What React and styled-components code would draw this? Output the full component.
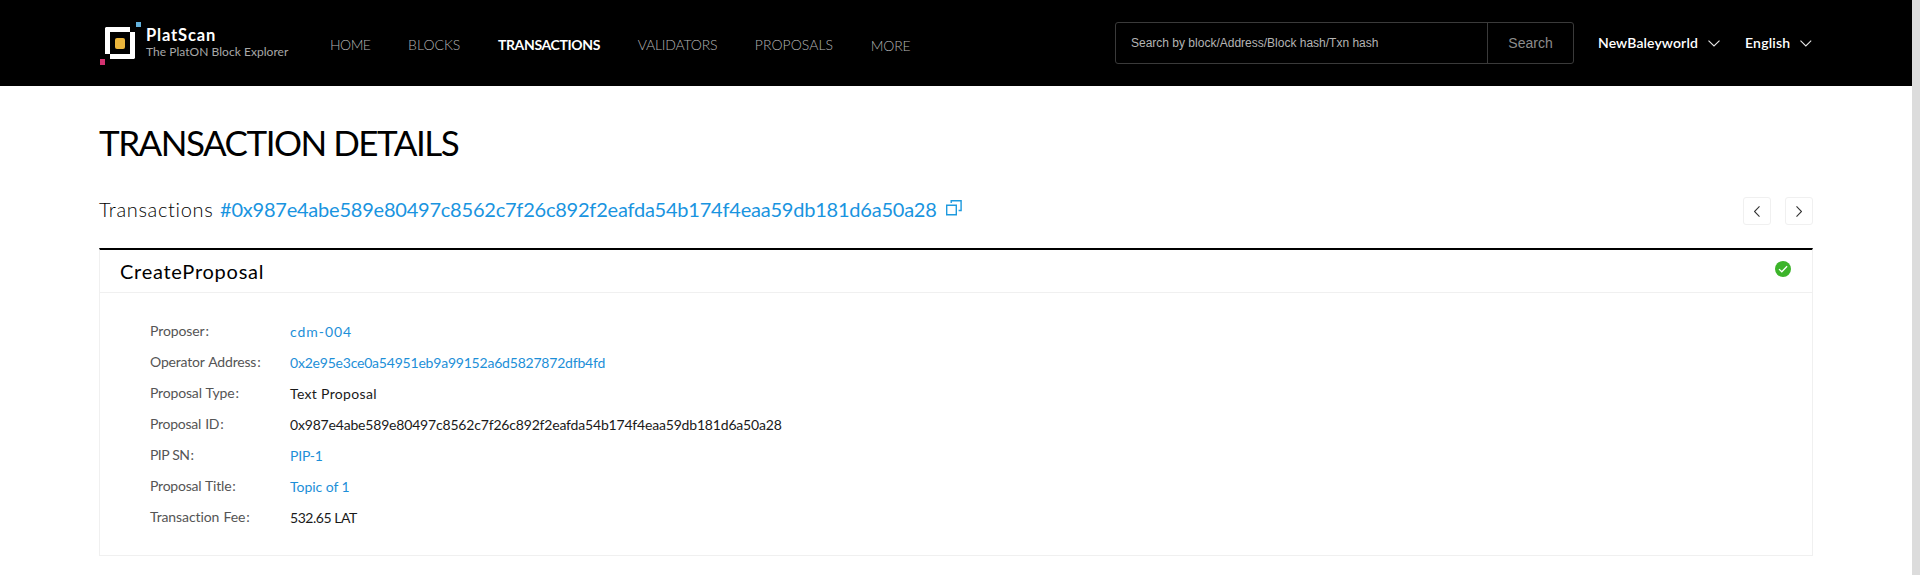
import React from 'react';
import styled, { createGlobalStyle } from 'styled-components';

const GlobalStyle = createGlobalStyle`
  * { box-sizing: border-box; }
  body {
    margin: 0;
    background: #fff;
    color: #000;
    font-family: Lato, "Liberation Sans", sans-serif;
    font-variant-ligatures: none;
    overflow: hidden;
  }
`;

const Shell = styled.div`
  display: flex;
  height: 575px;
`;
const Page = styled.div`
  flex: 1;
  min-width: 0;
`;
const ScrollTrack = styled.div`
  width: 8px;
  background: #dcdcdc;
`;

const Header = styled.header`
  display: flex;
  height: 86px;
  padding: 0 100px;
  background: #000;
`;
const Brand = styled.div`
  display: flex;
  width: 230px;
  padding-top: 22px;
`;
const BrandText = styled.div`
  margin-left: 4px;
  white-space: nowrap;
`;
const BrandName = styled.div`
  margin-top: 3px;
  font-size: 16.5px;
  font-weight: 700;
  line-height: 20px;
  letter-spacing: 0.85px;
  color: #fff;
`;
const BrandTagline = styled.div`
  margin-top: -1px;
  font-size: 12px;
  line-height: 16px;
  letter-spacing: 0.04px;
  color: #a8a8a8;
`;

const Nav = styled.nav`
  display: flex;
  gap: 37.6px;
  padding-top: 35px;
`;
const NavItem = styled.a`
  margin-top: ${(p) => (p.$dropdown ? 1 : 0)}px;
  font-size: 14px;
  line-height: 20px;
  font-weight: ${(p) => (p.$active ? 700 : 300)};
  color: ${(p) => (p.$active ? '#fff' : '#b4b4b4')};
  letter-spacing: ${(p) => p.$tracking}px;
`;

const Tools = styled.div`
  display: flex;
  margin-left: auto;
`;
const SearchBox = styled.div`
  display: flex;
  width: 459px;
  height: 42px;
  margin-top: 22px;
  border: 1px solid #3a3a3a;
  border-radius: 3px;
  font-family: "Liberation Sans", Arial, sans-serif;
`;
const SearchInput = styled.div`
  flex: 1;
  padding-left: 15px;
  font-size: 12px;
  line-height: 40px;
  color: #b4b4b4;
`;
const SearchButton = styled.div`
  width: 86px;
  border-left: 1px solid #3a3a3a;
  font-size: 14px;
  line-height: 41px;
  text-align: center;
  color: #8c8c8c;
`;
const Picker = styled.div`
  display: flex;
  align-items: center;
  gap: 10px;
  width: ${(p) => p.$width}px;
  height: 20px;
  margin: 32px 0 0 ${(p) => p.$offset}px;
  font-size: 14px;
  font-weight: 600;
  letter-spacing: ${(p) => p.$tracking}px;
  color: #fff;
  svg { margin: 2px 0 0 auto; }
`;

const Main = styled.main`
  padding: 0 99px;
`;
const Title = styled.h1`
  margin: 34px 0 0;
  font-size: 35px;
  font-weight: 400;
  line-height: 44px;
  letter-spacing: -1.5px;
`;
const TitleBar = styled.div`
  display: flex;
  height: 28px;
  margin: 33px 0 23px;
`;
const Hash = styled.div`
  display: flex;
  font-size: 20px;
  line-height: 24px;
  white-space: nowrap;
`;
const HashLabel = styled.span`
  width: 121px;
  font-weight: 300;
  letter-spacing: 0.68px;
  color: #000;
`;
const HashValue = styled.span`
  width: 726px;
  letter-spacing: -0.22px;
  color: #1994e0;
`;
const Pager = styled.div`
  display: flex;
  gap: 14px;
  margin-left: auto;
`;
const PagerButton = styled.div`
  display: flex;
  align-items: center;
  justify-content: center;
  width: 28px;
  height: 28px;
  border: 1px solid #f0f0f0;
  border-radius: 3px;
`;

const Card = styled.section`
  height: 308px;
  border: 1px solid #f0f0f0;
  border-top: 2px solid #000;
`;
const CardHeader = styled.div`
  display: flex;
  justify-content: space-between;
  height: 43px;
  padding: 11px 21px 0 20px;
  border-bottom: 1px solid #f0f0f0;
`;
const CardTitle = styled.div`
  margin-top: -1px;
  font-size: 20px;
  line-height: 22px;
  letter-spacing: 0.74px;
`;
const Details = styled.dl`
  margin: 22px 0 0 50px;
`;
const Detail = styled.div`
  display: flex;
  height: 31px;
  font-size: 14px;
  line-height: 31px;
`;
const Label = styled.dt`
  width: 140px;
  letter-spacing: ${(p) => p.$tracking}px;
  word-spacing: 0.8px;
  color: #555;
`;
const Colon = styled.span`
  margin-left: 1px;
`;
const Value = styled.dd`
  margin: 1px 0 0;
  letter-spacing: ${(p) => p.$tracking}px;
  color: ${(p) => (p.$link ? '#1d8fd8' : '#1a1a1a')};
`;

const Logo = () => (
  <svg width="42" height="44" viewBox="0 0 42 44">
    <path fill="#fff" d="M6 5h24v5H10v22H5V6z" />
    <path fill="#fff" d="M30 10h5v26l-1 1H10v-5h20z" />
    <rect x="15" y="16" width="10" height="11" rx="2" fill="#ebb53c" />
    <rect x="36" width="5" height="5" fill="#63b1dc" />
    <rect y="37" width="5" height="6" fill="#d23270" />
  </svg>
);
const ChevronDown = () => (
  <svg width="12" height="7" viewBox="0 0 12 7" fill="none" stroke="#e8e8e8" strokeWidth="1.1">
    <path d="M.5.6 6 6 11.5.6" />
  </svg>
);
const CopySvg = styled.svg`
  margin-top: 3px;
`;
const CopyIcon = () => (
  <CopySvg width="16" height="16" viewBox="0 0 16 16" fill="none" stroke="#1e9ade" strokeWidth="1.4">
    <path d="M.7 5.2h9.6v9.6H.7z" />
    <path d="M5.2 3V.7h9.9v9.8h-2.5" />
  </CopySvg>
);
const Arrow = ({ next }) => (
  <svg width="6" height="11" viewBox="0 0 6 11" fill="none" stroke="#333" strokeWidth="1.1">
    <path d={next ? 'M.5.4 5.5 5.5.5 10.6' : 'M5.5.4.5 5.5l5 5.1'} />
  </svg>
);
const SuccessIcon = () => (
  <svg width="16" height="16" viewBox="0 0 16 16" fill="none">
    <circle cx="8" cy="8" r="8" fill="#3cb42a" />
    <path d="m4 8.1 2.8 2.7 5.3-5.5" stroke="#fff" strokeWidth="1.3" />
  </svg>
);

const TX = '0x987e4abe589e80497c8562c7f26c892f2eafda54b174f4eaa59db181d6a50a28';

const NAV = [
  { text: 'HOME', tracking: -0.5 },
  { text: 'BLOCKS', tracking: 0 },
  { text: 'TRANSACTIONS', tracking: -0.36, active: true },
  { text: 'VALIDATORS', tracking: -0.2 },
  { text: 'PROPOSALS', tracking: 0.05 },
  { text: 'MORE', tracking: -0.2, dropdown: true },
];

const DETAILS = [
  { label: 'Proposer', lt: -0.1, value: 'cdm-004', vt: 0.95, link: true },
  { label: 'Operator Address', lt: -0.18, value: '0x2e95e3ce0a54951eb9a99152a6d5827872dfb4fd', vt: -0.21, link: true },
  { label: 'Proposal Type', lt: -0.17, value: 'Text Proposal', vt: 0.33 },
  { label: 'Proposal ID', lt: -0.26, value: TX, vt: -0.185 },
  { label: 'PIP SN', lt: -0.6, value: 'PIP-1', vt: -0.2, link: true },
  { label: 'Proposal Title', lt: -0.22, value: 'Topic of 1', vt: -0.05, link: true },
  { label: 'Transaction Fee', lt: -0.1, value: '532.65 LAT', vt: -0.45 },
];

export default function App() {
  return (
    <Shell>
      <GlobalStyle />
      <Page>
        <Header>
          <Brand>
            <Logo />
            <BrandText>
              <BrandName>PlatScan</BrandName>
              <BrandTagline>The PlatON Block Explorer</BrandTagline>
            </BrandText>
          </Brand>
          <Nav>
            {NAV.map((n) => (
              <NavItem key={n.text} $active={n.active} $dropdown={n.dropdown} $tracking={n.tracking}>
                {n.text}
              </NavItem>
            ))}
          </Nav>
          <Tools>
            <SearchBox>
              <SearchInput>Search by block/Address/Block hash/Txn hash</SearchInput>
              <SearchButton>Search</SearchButton>
            </SearchBox>
            <Picker $width={122} $offset={24} $tracking={0.12}>
              NewBaleyworld
              <ChevronDown />
            </Picker>
            <Picker $width={67} $offset={25} $tracking={0.2}>
              English
              <ChevronDown />
            </Picker>
          </Tools>
        </Header>
        <Main>
          <Title>TRANSACTION DETAILS</Title>
          <TitleBar>
            <Hash>
              <HashLabel>Transactions</HashLabel>
              <HashValue>#{TX}</HashValue>
              <CopyIcon />
            </Hash>
            <Pager>
              <PagerButton><Arrow /></PagerButton>
              <PagerButton><Arrow next /></PagerButton>
            </Pager>
          </TitleBar>
          <Card>
            <CardHeader>
              <CardTitle>CreateProposal</CardTitle>
              <SuccessIcon />
            </CardHeader>
            <Details>
              {DETAILS.map((d) => (
                <Detail key={d.label}>
                  <Label $tracking={d.lt}>{d.label}<Colon>:</Colon></Label>
                  <Value $tracking={d.vt} $link={d.link}>{d.value}</Value>
                </Detail>
              ))}
            </Details>
          </Card>
        </Main>
      </Page>
      <ScrollTrack />
    </Shell>
  );
}
